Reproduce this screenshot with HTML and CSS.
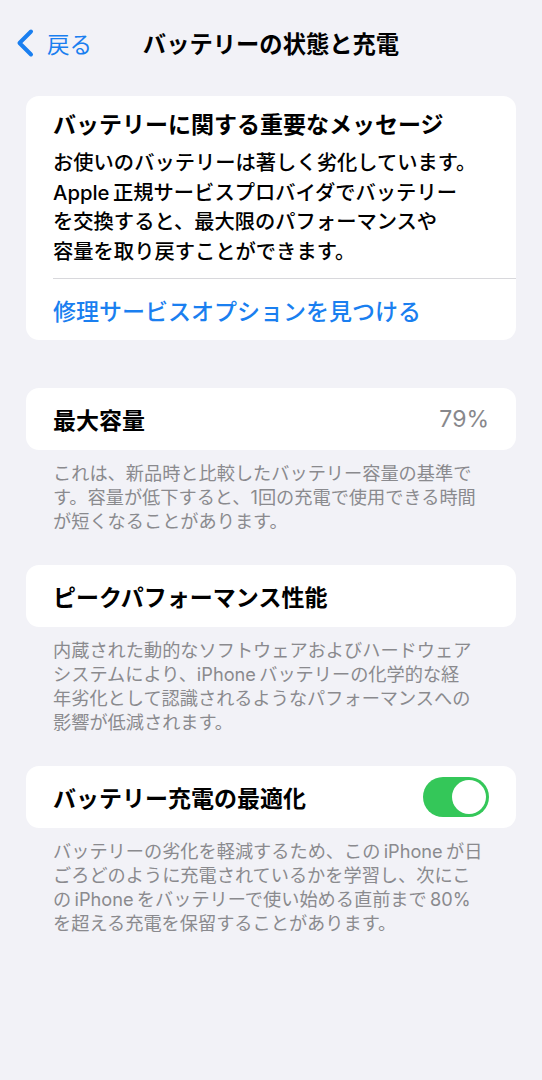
FILE: index.html
```html
<!DOCTYPE html>
<html lang="ja">
<head>
    <meta charset="utf-8">
    <title>バッテリーの状態と充電</title>
    <link rel="stylesheet" href="styles.css">
</head>
<body>
    <div class="nav">
        <a class="back" href="#">
            <svg class="chevron" width="20" height="30" viewBox="0 0 20 30">
                <path d="M16 3.5 L4.5 15 L16 26.5" fill="none" stroke="#1a7ff0" stroke-width="4" stroke-linecap="round" stroke-linejoin="round"/>
            </svg>
            <span>戻る</span>
        </a>
        <h1 class="nav-title">バッテリーの状態と充電</h1>
        <div></div>
    </div>

    <div class="card notice">
        <div class="notice-body">
            <h2 class="notice-title">バッテリーに関する重要なメッセージ</h2>
            <p class="notice-text">お使いのバッテリーは著しく劣化しています。<br>Apple&#8201;正規サービスプロバイダでバッテリー<br>を交換すると、最大限のパフォーマンスや<br>容量を取り戻すことができます。</p>
        </div>
        <a class="notice-link" href="#">修理サービスオプションを見つける</a>
    </div>

    <div class="card row">
        <span class="row-label">最大容量</span>
        <span class="row-value">79%</span>
    </div>
    <p class="footer">これは、新品時と比較したバッテリー容量の基準で<br>す。容量が低下すると、1回の充電で使用できる時間<br>が短くなることがあります。</p>

    <div class="card row">
        <span class="row-label">ピークパフォーマンス性能</span>
    </div>
    <p class="footer">内蔵された動的なソフトウェアおよびハードウェア<br>システムにより、iPhone&#8201;バッテリーの化学的な経<br>年劣化として認識されるようなパフォーマンスへの<br>影響が低減されます。</p>

    <div class="card row">
        <span class="row-label">バッテリー充電の最適化</span>
        <span class="toggle on"><span class="knob"></span></span>
    </div>
    <p class="footer">バッテリーの劣化を軽減するため、この&#8201;iPhone&#8201;が日<br>ごろどのように充電されているかを学習し、次にこ<br>の&#8201;iPhone&#8201;をバッテリーで使い始める直前まで&#8201;80%<br>を超える充電を保留することがあります。</p>
</body>
</html>
```

FILE: styles.css
```css
body {
    margin: 0;
    background-color: #f2f2f7;
    font-family: "Inter", "Noto Sans CJK JP", sans-serif;
    color: #000;
}

.nav {
    display: grid;
    grid-template-columns: 1fr auto 1fr;
    align-items: center;
    height: 86px;
    margin-bottom: 10px;
}

.back {
    display: flex;
    align-items: center;
    gap: 12px;
    padding-left: 15px;
    color: #1a7ff0;
    text-decoration: none;
    font-size: 22.5px;
}

.chevron {
    display: block;
}

.nav-title {
    margin: 0;
    font-size: 23.3px;
    font-weight: 700;
}

.card {
    margin: 0 26px;
    background-color: #fff;
    border-radius: 13px;
}

.notice {
    padding-left: 27px;
}

.notice-body {
    padding: 14px 27px 12px 0;
    border-bottom: 1px solid #d8d8dc;
}

.notice-title {
    margin: 0 0 8px;
    font-size: 23px;
    line-height: 30px;
    font-weight: 700;
}

.notice-text {
    margin: 0;
    font-size: 20.3px;
    line-height: 29.5px;
    font-weight: 500;
}

.notice-link {
    display: flex;
    align-items: center;
    height: 61px;
    color: #1a7ff0;
    text-decoration: none;
    font-size: 23px;
    font-weight: 500;
}

.row {
    display: flex;
    justify-content: space-between;
    align-items: center;
    height: 62px;
    padding: 0 27px;
    margin-top: 48px;
}

.footer + .row {
    margin-top: 32px;
}

.row-label {
    font-size: 23px;
    font-weight: 700;
}

.row-value {
    font-size: 23px;
    color: #88888c;
}

.toggle {
    display: flex;
    justify-content: flex-end;
    align-items: center;
    width: 66px;
    height: 40px;
    padding: 0 3px;
    box-sizing: border-box;
    border-radius: 20px;
    background-color: #34c759;
}

.knob {
    width: 34px;
    height: 34px;
    border-radius: 50%;
    background-color: #fff;
}

.footer {
    margin: 11px 0 0;
    padding: 0 26px 0 53px;
    font-size: 18.2px;
    line-height: 24px;
    color: #8a8a8e;
}
```
